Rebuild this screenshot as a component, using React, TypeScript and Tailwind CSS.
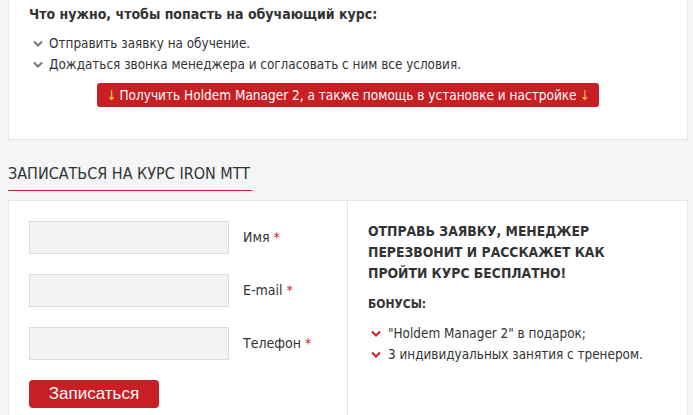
import React from "react";

const F = { fontFamily: 'Tahoma, "DejaVu Sans Condensed", "DejaVu Sans", sans-serif' };

function Check({ color }: { color: string }) {
  return (
    <svg width="10" height="7" viewBox="0 0 10 7" className="shrink-0">
      <path d="M1 1.5 L5 5.5 L9 1.5" fill="none" stroke={color} strokeWidth="2" />
    </svg>
  );
}

function Field({ label }: { label: string }) {
  return (
    <div className="flex items-center">
      <div className="w-[200px] h-[33px] bg-[#f3f2f1] border border-[#dcdcdc]" />
      <span className="ml-[14px] text-[14px] text-[#333]">
        {label} <span className="text-[#c81e24]">*</span>
      </span>
    </div>
  );
}

export default function App() {
  return (
    <div className="w-[693px] h-[415px] overflow-hidden bg-[#f4f5f7] pl-[8px] pr-[5px]" style={F}>
      <div className="bg-white border border-t-0 border-[#e6e6e6] h-[140px] pt-[5px]">
        <div className="pl-[20px] text-[14px] leading-[18px] font-bold text-[#333]">
          Что нужно, чтобы попасть на обучающий курс:
        </div>
        <div className="mt-[10px] pl-[24px] text-[13.4px] leading-[21px] text-[#333]">
          <div className="flex items-center gap-[6px]"><Check color="#777" />Отправить заявку на обучение.</div>
          <div className="flex items-center gap-[6px]"><Check color="#777" />Дождаться звонка менеджера и согласовать с ним все условия.</div>
        </div>
        <div className="flex justify-center mt-[8px]">
          <div className="bg-[#c81e24] rounded-[3px] h-[24px] px-[9px] flex items-center text-white text-[13.5px]">
            <span className="text-[#f8cf4a] mr-[3px]">↓</span>Получить Holdem Manager 2, а также помощь в установке и настройке<span className="text-[#f8cf4a] ml-[3px]">↓</span>
          </div>
        </div>
      </div>

      <div className="pt-[22px] h-[60px]">
        <div className="inline-block border-b border-[#c81e24] text-[16px] leading-[22px] pb-[5px] pr-[2px] text-[#333]">
          ЗАПИСАТЬСЯ НА КУРС IRON MTT
        </div>
      </div>

      <div className="bg-white border border-[#e6e6e6] flex h-[240px]">
        <div className="w-[339px] border-r border-[#e6e6e6] pt-[20px] pl-[20px]">
          <div className="flex flex-col gap-[20px]">
            <Field label="Имя" />
            <Field label="E-mail" />
            <Field label="Телефон" />
          </div>
          <button
            className="mt-[20px] w-[130px] h-[28px] bg-[#c81e24] rounded-[4px] text-white text-[17px]"
            style={{ fontFamily: '"Liberation Sans", Arial, sans-serif' }}
          >
            Записаться
          </button>
        </div>
        <div className="flex-1 pt-[20px] pl-[20px] text-[#333]">
          <div className="text-[13.8px] font-bold leading-[21px]">
            ОТПРАВЬ ЗАЯВКУ, МЕНЕДЖЕР<br />ПЕРЕЗВОНИТ И РАССКАЖЕТ КАК<br />ПРОЙТИ КУРС БЕСПЛАТНО!
          </div>
          <div className="mt-[10px] text-[12px] font-bold leading-[21px]">БОНУСЫ:</div>
          <div className="mt-[8px] pl-[3px] text-[13.4px] leading-[21px]">
            <div className="flex items-center gap-[7px]"><Check color="#c81e24" />"Holdem Manager 2" в подарок;</div>
            <div className="flex items-center gap-[7px]"><Check color="#c81e24" />3 индивидуальных занятия с тренером.</div>
          </div>
        </div>
      </div>
    </div>
  );
}
